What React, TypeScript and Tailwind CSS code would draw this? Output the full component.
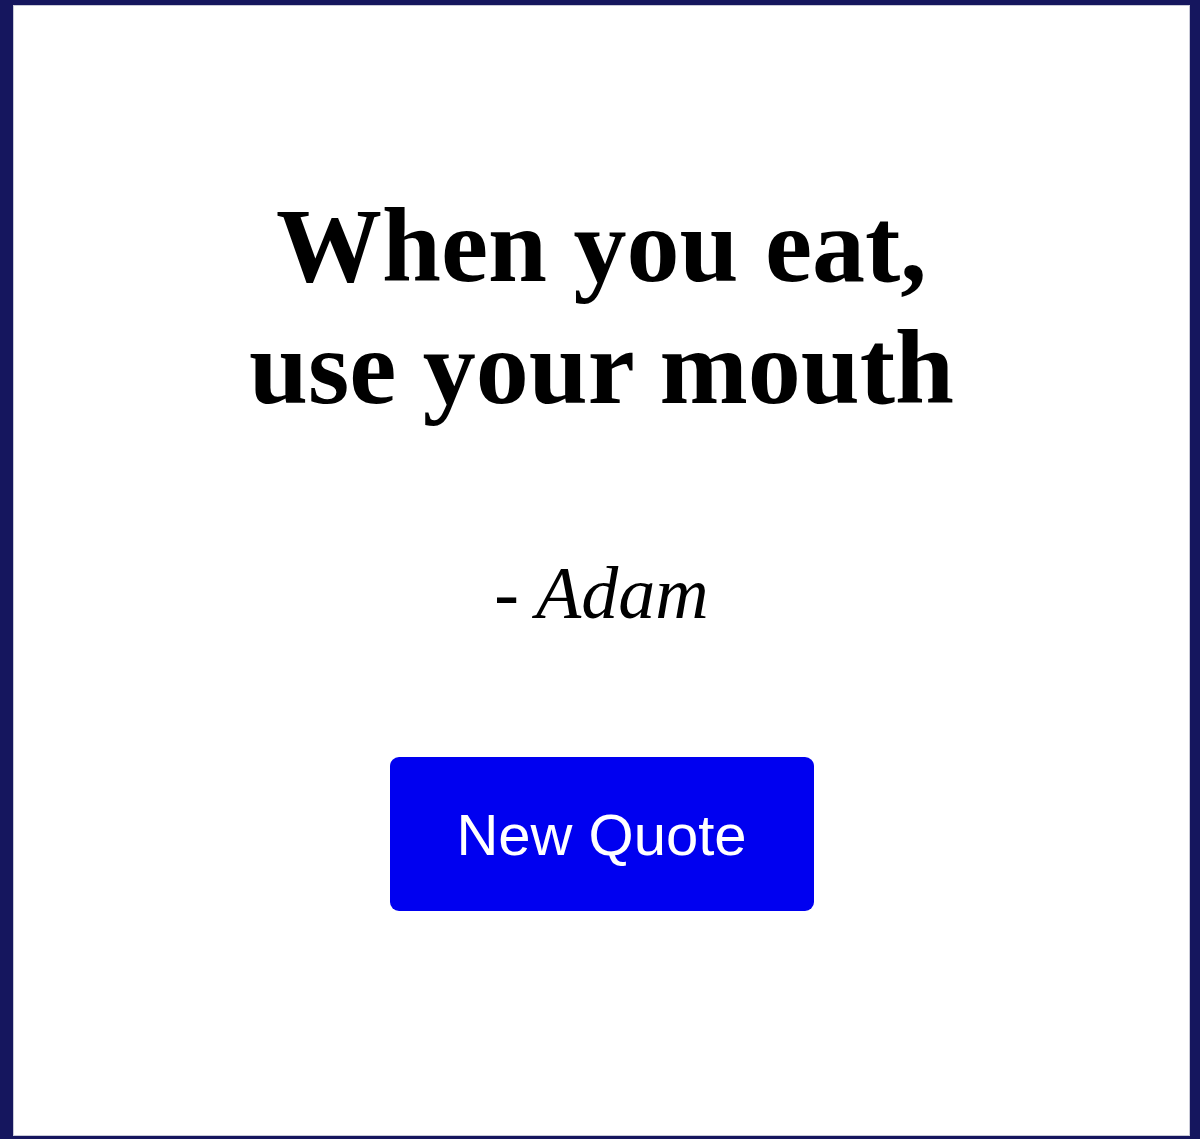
import React, { useState } from 'react';

const quotes = [
  { text: ['When you eat,', 'use your mouth'], author: 'Adam' },
];

export default function App() {
  const [index, setIndex] = useState(0);
  const quote = quotes[index];

  return (
    <div className="h-[1139px] w-full bg-[#15165e] pt-[5px] pl-[13px] pr-[10px] pb-[3px]">
      <div className="flex h-full flex-col items-center border border-[#c9cad8] bg-white pt-[179px]">
        <h1 className="text-center font-['Liberation_Serif',serif] text-[106px] font-bold leading-[122px] text-black">
          {quote.text[0]}
          <br />
          {quote.text[1]}
        </h1>
        <p className="mt-[122px] font-['Liberation_Serif',serif] text-[74px] italic leading-[85px] text-black">
          - {quote.author}
        </p>
        <button
          type="button"
          onClick={() => setIndex((index + 1) % quotes.length)}
          className="mt-[121px] flex h-[154px] w-[424px] items-center justify-center rounded-[9px] bg-[#0000f0] font-['Liberation_Sans',Arial,sans-serif] text-[58px] text-white"
        >
          New Quote
        </button>
      </div>
    </div>
  );
}
